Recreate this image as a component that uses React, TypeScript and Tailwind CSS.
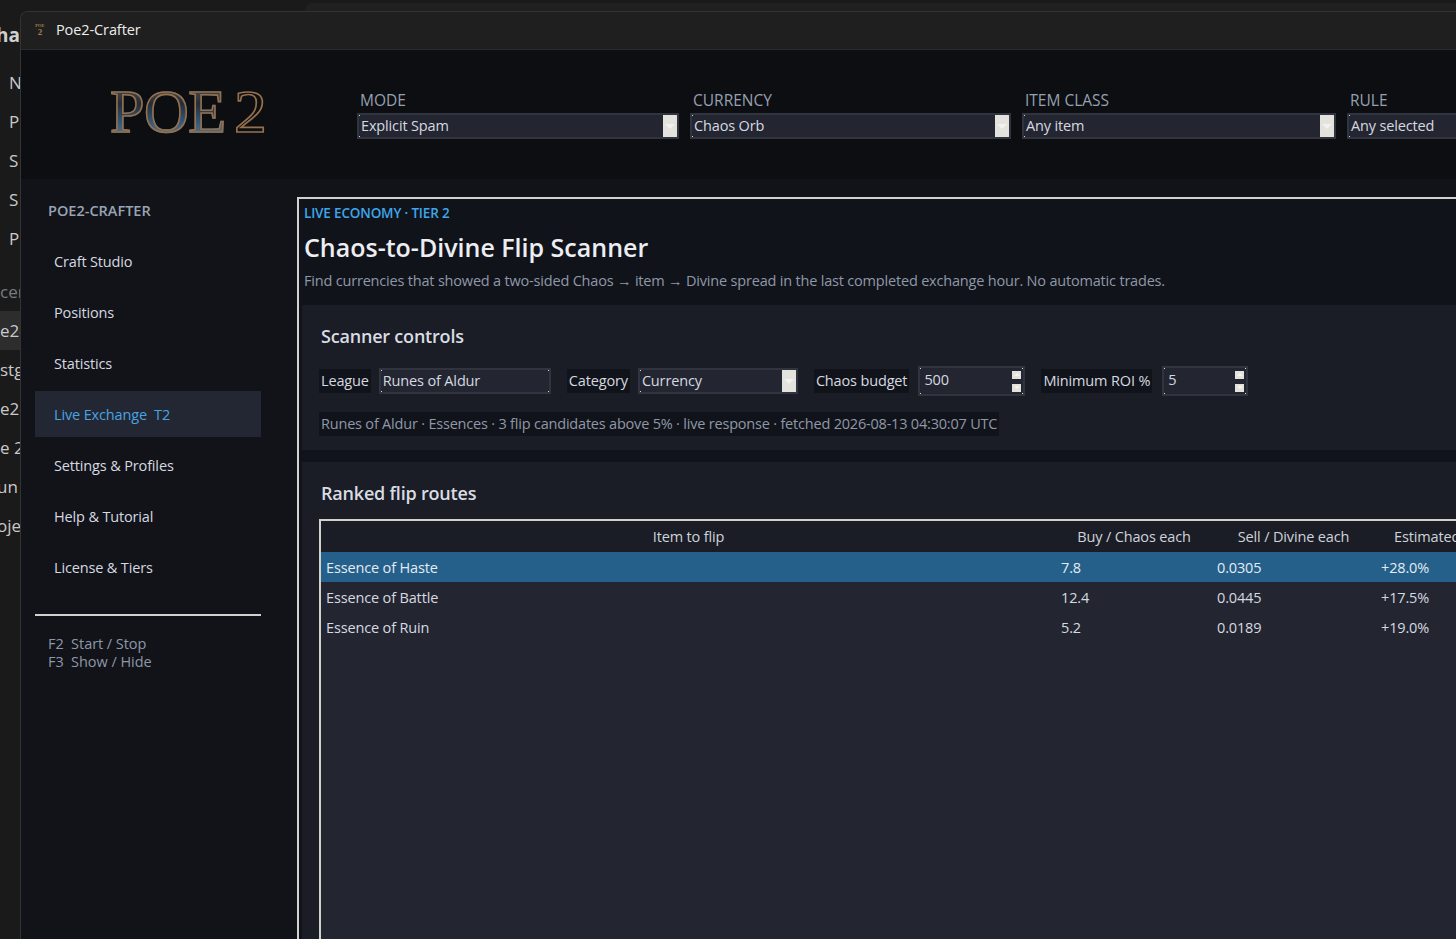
const font = "font-['Open_Sans','Noto_Sans',sans-serif]";

function Dots() {
  return (
    <>
      <span className="absolute left-0 top-0 h-px w-px bg-[#d8d8d8]" />
      <span className="absolute right-0 top-0 h-px w-px bg-[#d8d8d8]" />
      <span className="absolute bottom-0 left-0 h-px w-px bg-[#d8d8d8]" />
      <span className="absolute bottom-0 right-0 h-px w-px bg-[#d8d8d8]" />
    </>
  );
}

function ArrowBtn() {
  return (
    <span className="flex h-[22px] w-[14px] shrink-0 items-center justify-center bg-[#e3e2dc]">
      <span className="h-0 w-0 border-x-[5px] border-t-[5px] border-x-transparent border-t-[#f2f1ed]" />
    </span>
  );
}

function Combo({ text, w, arrow = true }: { text: string; w: string; arrow?: boolean }) {
  return (
    <div className={`relative flex h-[26px] ${w} shrink-0 items-center justify-between border-2 border-[#30343f] bg-[#232630] pl-[2px] pr-[0px] text-[14.5px] leading-none tracking-[-0.15px] text-[#d6d9e0]`}>
      <span>{text}</span>
      {arrow && <ArrowBtn />}
      <Dots />
    </div>
  );
}

function Field({ label, text, w }: { label: string; text: string; w: string }) {
  return (
    <div className="flex shrink-0 flex-col">
      <div className="h-[25px] pl-[3px] text-[15.5px] leading-[24px] tracking-[0px] text-[#97a0b0]">{label}</div>
      <Combo text={text} w={w} />
    </div>
  );
}

function Spin({ value, w }: { value: string; w: string }) {
  return (
    <div className={`relative flex h-[30px] ${w} shrink-0 items-center justify-between border-2 border-[#30343f] bg-[#232630] pl-[4px] pr-[2px] text-[14.5px] leading-none tracking-[-0.15px] text-[#d6d9e0]`}>
      <span className="-mt-[2px]">{value}</span>
      <span className="flex flex-col gap-[5px]">
        <span className="flex h-[8px] w-[9px] items-center justify-center bg-[#e3e2dc]"><span className="h-0 w-0 border-x-[3px] border-b-[3px] border-x-transparent border-b-[#f5f4f0]" /></span>
        <span className="flex h-[8px] w-[9px] items-center justify-center bg-[#e3e2dc]"><span className="h-0 w-0 border-x-[3px] border-t-[3px] border-x-transparent border-t-[#f5f4f0]" /></span>
      </span>
      <Dots />
    </div>
  );
}

function Tag({ children }: { children: string }) {
  return <span className="flex h-[24px] shrink-0 items-center bg-[#11131a] px-[2px] text-[14.5px] leading-none tracking-[-0.15px] text-[#d6d9e0]">{children}</span>;
}

const nav = ["Craft Studio", "Positions", "Statistics", "Live Exchange  T2", "Settings & Profiles", "Help & Tutorial", "License & Tiers"];
const rows = [
  ["Essence of Haste", "7.8", "0.0305", "+28.0%"],
  ["Essence of Battle", "12.4", "0.0445", "+17.5%"],
  ["Essence of Ruin", "5.2", "0.0189", "+19.0%"],
];
const behind = ["N", "P", "S", "S", "P"];
const behind2 = [
  ["e2-crafter", "bg-[#2d2d2d]"],
  ["stg", ""],
  ["e2-c", ""],
  ["e 2", ""],
  ["un", "ml-[-3px]"],
  ["oje", "ml-[-3px]"],
];

export default function App() {
  return (
    <div className={`relative flex h-[939px] w-[1456px] overflow-hidden bg-[#1a1a1a] ${font}`}>
      <div className="absolute left-[305px] top-[3px] h-[20px] w-[1200px] rounded-t-lg bg-[#202020]" />

      <div className="flex w-[20px] shrink-0 flex-col overflow-hidden whitespace-nowrap text-[17px] leading-none text-[#c9c9c9]">
        <div className="ml-[-4px] mt-[24px] h-[22px] text-[19px] font-bold leading-[22px] text-[#d0d0d0]">ha</div>
        <div className="mt-[17px] flex flex-col">
          {behind.map((t, i) => (
            <div key={i} className="flex h-[39px] items-center pl-[9px]">{t}</div>
          ))}
        </div>
        <div className="mt-[14px] flex h-[39px] items-center text-[#7c7c7c]">cer</div>
        {behind2.map(([t, c]) => (
          <div key={t} className={`flex h-[39px] items-center ${c}`}>{t}</div>
        ))}
      </div>

      <div className="relative mt-[11px] flex h-[928px] w-[1500px] shrink-0 flex-col overflow-hidden rounded-tl-lg border-l border-t border-[#333333] bg-[#111318]">
        <div className="flex h-[38px] shrink-0 items-center border-b border-[#2a2a2a] bg-[#1f1f1f]">
          <div className="ml-[12px] flex w-[14px] flex-col items-center font-['Liberation_Serif',serif] font-bold leading-none text-[#a8814f]">
            <span className="text-[4.5px]">POE</span>
            <span className="text-[9px]">2</span>
          </div>
          <span className="-mt-[2px] ml-[9px] text-[14.5px] tracking-[-0.1px] text-[#ededed]">Poe2-Crafter</span>
        </div>

        <div className="flex h-[129px] shrink-0 bg-[#0c0e12]">
          <div className="w-[336px] shrink-0 pl-[89px] pt-[25px]">
            <div className="flex bg-[linear-gradient(180deg,#5d626c_0%,#262c36_40%,#35597a_66%,#7d8188_100%)] bg-clip-text font-['Liberation_Serif',serif] text-[62px] leading-[72px] tracking-[-0.5px] text-transparent [-webkit-text-stroke:1.6px_#94714c]">
              <span>POE</span>
              <span className="ml-[9px] scale-x-[1.06]">2</span>
            </div>
          </div>
          <div className="flex gap-[11px] pt-[38px]">
            <Field label="MODE" text="Explicit Spam" w="w-[322px]" />
            <Field label="CURRENCY" text="Chaos Orb" w="w-[321px]" />
            <Field label="ITEM CLASS" text="Any item" w="w-[314px]" />
            <Field label="RULE" text="Any selected" w="w-[321px]" />
          </div>
        </div>

        <div className="flex min-h-0 flex-1">
          <aside className="w-[276px] shrink-0 pl-[14px] pt-[21px]">
            <div className="h-[22px] pl-[13px] text-[14.5px] font-semibold leading-[22px] tracking-[0px] text-[#9aa3b3]">POE2-CRAFTER</div>
            <div className="mt-[16px] flex w-[226px] flex-col gap-[5px]">
              {nav.map((n) => (
                <div key={n} className={`flex h-[46px] items-center whitespace-pre pl-[19px] text-[14.5px] tracking-[-0.15px] ${n.startsWith("Live") ? "bg-[#232733] text-[#4aa3e0]" : "text-[#d6d9e0]"}`}>
                  <span className="pt-[1px]">{n}</span>
                </div>
              ))}
            </div>
            <div className="mt-[24px] h-[2px] w-[226px] bg-[#d2d1cb]" />
            <div className="mt-[19px] whitespace-pre pl-[13px] text-[14.5px] leading-[18px] tracking-[-0.05px] text-[#8e97a8]">
              <div>F2  Start / Stop</div>
              <div>F3  Show / Hide</div>
            </div>
          </aside>

          <main className="mt-[18px] flex w-[1200px] shrink-0 flex-col border-2 border-b-0 border-[#d2d1cb] bg-[#11131a]">
            <div className="h-[106px] shrink-0 pl-[5px]">
              <div className="pt-[4px] text-[13.5px] font-semibold leading-[20px] tracking-[-0.17px] text-[#3ea6ea]">LIVE ECONOMY · TIER 2</div>
              <div className="mt-[6px] text-[25px] font-semibold leading-[36px] tracking-[0px] text-[#eceef2]">Chaos-to-Divine Flip Scanner</div>
              <div className="mt-[6px] whitespace-pre text-[14.5px] leading-[20px] tracking-[-0.19px] text-[#8f98a8]">Find currencies that showed a two-sided Chaos → item → Divine spread in the last completed exchange hour. No automatic trades.</div>
            </div>

            <section className="ml-[3px] h-[145px] shrink-0 bg-[#1a1d26] pl-[19px] pt-[18px]">
              <h2 className="text-[18px] font-semibold leading-[26px] tracking-[-0.2px] text-[#d9dce2]">Scanner controls</h2>
              <div className="-ml-[2px] mt-[17px] flex h-[30px] items-center">
                <Tag>League</Tag>
                <div className="ml-[8px]"><Combo text="Runes of Aldur" w="w-[172px]" arrow={false} /></div>
                <div className="ml-[16px]"><Tag>Category</Tag></div>
                <div className="ml-[8px]"><Combo text="Currency" w="w-[160px]" /></div>
                <div className="ml-[16px]"><Tag>Chaos budget</Tag></div>
                <div className="ml-[9px]"><Spin value="500" w="w-[107px]" /></div>
                <div className="ml-[16px]"><Tag>Minimum ROI %</Tag></div>
                <div className="ml-[10px]"><Spin value="5" w="w-[86px]" /></div>
              </div>
              <div className="-ml-[2px] mt-[16px] flex">
                <div className="flex h-[24px] items-center bg-[#11131a] px-[2px] text-[14.5px] leading-none tracking-[-0.2px] text-[#8f98a8]">Runes of Aldur · Essences · 3 flip candidates above 5% · live response · fetched 2026-08-13 04:30:07 UTC</div>
              </div>
            </section>

            <section className="ml-[3px] mt-[12px] flex min-h-0 flex-1 flex-col bg-[#1a1d26] pl-[19px] pt-[18px]">
              <h2 className="text-[18px] font-semibold leading-[26px] tracking-[-0.2px] text-[#d9dce2]">Ranked flip routes</h2>
              <div className="-ml-[2px] mt-[13px] flex min-h-0 flex-1 flex-col border-2 border-b-0 border-[#d2d1cb] bg-[#232630]">
                <div className="flex h-[31px] shrink-0 items-center bg-[#1a1d26] text-[14.5px] tracking-[-0.15px] text-[#cfd3da]">
                  <div className="w-[735px] shrink-0 text-center">Item to flip</div>
                  <div className="w-[156px] shrink-0 text-center">Buy / Chaos each</div>
                  <div className="w-[163px] shrink-0 text-center">Sell / Divine each</div>
                  <div className="w-[160px] shrink-0 whitespace-nowrap pl-[19px]">Estimated ROI</div>
                </div>
                {rows.map((r, i) => (
                  <div key={r[0]} className={`flex h-[30px] shrink-0 items-center pt-[1px] text-[14.5px] tracking-[-0.15px] ${i === 0 ? "bg-[#24608a] text-[#e4ebf2]" : "text-[#d6d9e0]"}`}>
                    <div className="w-[735px] shrink-0 pl-[5px]">{r[0]}</div>
                    <div className="w-[156px] shrink-0 pl-[5px]">{r[1]}</div>
                    <div className="w-[163px] shrink-0 pl-[5px]">{r[2]}</div>
                    <div className="w-[160px] shrink-0 pl-[6px]">{r[3]}</div>
                  </div>
                ))}
              </div>
            </section>
          </main>
        </div>
      </div>
    </div>
  );
}
